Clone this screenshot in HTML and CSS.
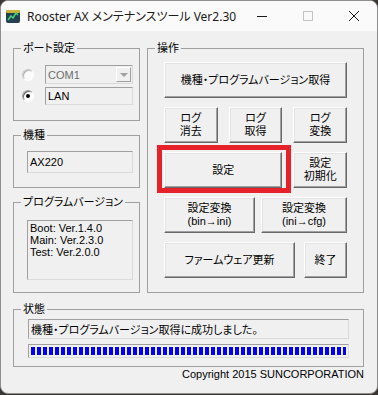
FILE: index.html
```html
<!DOCTYPE html>
<html lang="ja">

<head>
    <meta charset="UTF-8">
    <meta name="viewport" content="width=device-width, initial-scale=1.0">
    <title>Rooster AX メンテナンスツール</title>
    <link rel="stylesheet" href="styles.css">
</head>

<body>
    <div class="window">
        <header class="titlebar">
            <svg class="app-icon" viewBox="0 0 16 16" width="16" height="16">
                <rect x="1" y="2" width="14" height="13" rx="2" fill="#24404f" />
                <rect x="1" y="2" width="14" height="3" rx="1" fill="#c9b23c" />
                <polyline points="3,12 6,8 8,10 11,5 13,7" fill="none" stroke="#3fd07a" stroke-width="1.5" />
            </svg>
            <span class="title">Rooster AX メンテナンスツール Ver2.30</span>
            <div class="caption-buttons">
                <span class="cap-btn">
                    <svg width="10" height="10" viewBox="0 0 10 10"><line x1="0" y1="5.5" x2="10" y2="5.5" stroke="#1a1a1a" /></svg>
                </span>
                <span class="cap-btn">
                    <svg width="10" height="10" viewBox="0 0 10 10"><rect x="0.5" y="0.5" width="9" height="9" fill="none" stroke="#c2c2c2" /></svg>
                </span>
                <span class="cap-btn">
                    <svg width="10" height="10" viewBox="0 0 10 10"><path d="M0 0 L10 10 M10 0 L0 10" stroke="#1a1a1a" stroke-width="1" /></svg>
                </span>
            </div>
        </header>

        <main class="client">
            <div class="upper">
                <div class="left-col">
                    <fieldset class="group">
                        <legend>ポート設定</legend>
                        <div class="port-body">
                            <div class="port-row">
                                <span class="radio disabled"></span>
                                <div class="combo disabled">
                                    <span class="combo-text">COM1</span>
                                    <span class="drop"></span>
                                </div>
                            </div>
                            <div class="port-row">
                                <span class="radio checked"></span>
                                <div class="edit lan">LAN</div>
                            </div>
                        </div>
                    </fieldset>

                    <fieldset class="group">
                        <legend>機種</legend>
                        <div class="model-body">
                            <div class="edit model">AX220</div>
                        </div>
                    </fieldset>

                    <fieldset class="group grow">
                        <legend>プログラムバージョン</legend>
                        <div class="version-body">
                            <div class="edit versions">
                                Boot: Ver.1.4.0<br>
                                Main: Ver.2.3.0<br>
                                Test: Ver.2.0.0
                            </div>
                        </div>
                    </fieldset>
                </div>

                <fieldset class="group ops">
                    <legend>操作</legend>
                    <div class="ops-body">
                        <div class="row-one">
                            <button class="btn">機種・プログラムバージョン取得</button>
                        </div>
                        <div class="row-three">
                            <button class="btn">ログ<br>消去</button>
                            <button class="btn">ログ<br>取得</button>
                            <button class="btn">ログ<br>変換</button>
                        </div>
                        <div class="row-three">
                            <div class="marked">
                                <button class="btn">設定</button>
                            </div>
                            <button class="btn">設定<br>初期化</button>
                        </div>
                        <div class="row-convert">
                            <button class="btn">設定変換<br>(bin→ini)</button>
                            <button class="btn">設定変換<br>(ini→cfg)</button>
                        </div>
                        <div class="row-last">
                            <button class="btn">ファームウェア更新</button>
                            <button class="btn">終了</button>
                        </div>
                    </div>
                </fieldset>
            </div>

            <fieldset class="group status">
                <legend>状態</legend>
                <div class="status-body">
                    <div class="edit message">機種・プログラムバージョン取得に成功しました。</div>
                    <div class="progress"><div class="progress-fill"></div></div>
                </div>
            </fieldset>

            <div class="copyright">Copyright 2015 SUNCORPORATION</div>
        </main>
    </div>
</body>

</html>
```

FILE: styles.css
```css
* {
    box-sizing: border-box;
}

html,
body {
    margin: 0;
}

body {
    width: 378px;
    height: 395px;
    overflow: hidden;
    background: #3b3632;
    font-family: "Liberation Sans", "Noto Sans CJK JP", sans-serif;
    font-size: 11px;
    font-feature-settings: "palt";
    color: #000;
}

.window {
    width: 378px;
    height: 394px;
    background: #f0f0f0;
    border: 1px solid #8e8e8e;
    border-radius: 8px;
    overflow: hidden;
    display: flex;
    flex-direction: column;
}

/* Title bar */

.titlebar {
    height: 30px;
    flex: none;
    background: #fafafa;
    display: flex;
    align-items: center;
}

.app-icon {
    margin-left: 4px;
    flex: none;
}

.title {
    margin-left: 6px;
    font-family: "Noto Sans", "Noto Sans CJK JP", sans-serif;
    font-size: 12px;
    color: #1a1a1a;
    flex: 1;
}

.caption-buttons {
    display: flex;
    height: 100%;
}

.cap-btn {
    width: 46px;
    display: flex;
    align-items: center;
    justify-content: center;
}

/* Client area */

.client {
    flex: 1;
    padding: 11px 13px 0 12px;
    display: flex;
    flex-direction: column;
}

.upper {
    display: flex;
    gap: 7px;
}

.left-col {
    width: 127px;
    display: flex;
    flex-direction: column;
    gap: 8px;
}

.group {
    margin: 0;
    padding: 0;
    border: 1px solid #a0a0a0;
    min-width: 0;
}

.group legend {
    margin-left: 7px;
    padding: 0 2px;
    line-height: 13px;
}

.grow {
    flex: 1;
}

.ops {
    flex: 1;
}

/* Edit boxes */

.edit {
    border: 1px solid;
    border-color: #a0a0a0 #dadada #dadada #a0a0a0;
    background: #f0f0f0;
    padding-left: 2px;
}

.port-body {
    padding: 10px 6px 15px 8px;
    display: flex;
    flex-direction: column;
    gap: 3px;
}

.port-row {
    display: flex;
    align-items: center;
    gap: 11px;
}

.radio {
    width: 12px;
    height: 12px;
    flex: none;
    border-radius: 50%;
    border: 1px solid;
    border-color: #a0a0a0 #fff #fff #a0a0a0;
    box-shadow: inset 1px 1px 0 #696969;
    background: #fff;
    position: relative;
}

.radio.disabled {
    border-color: #c8c8c8 #fff #fff #c8c8c8;
    box-shadow: inset 1px 1px 0 #b4b4b4;
    background: #fbfbfb;
}

.radio.checked::after {
    content: "";
    position: absolute;
    left: 3px;
    top: 3px;
    width: 4px;
    height: 4px;
    border-radius: 50%;
    background: #000;
}

.combo {
    flex: 1;
    height: 19px;
    display: flex;
    align-items: center;
    justify-content: space-between;
    border: 1px solid;
    border-color: #a0a0a0 #dadada #dadada #a0a0a0;
    padding: 0 1px 0 2px;
}

.combo-text {
    color: #6d6d6d;
}

.drop {
    width: 15px;
    height: 15px;
    border: 1px solid;
    border-color: #fff #a0a0a0 #a0a0a0 #fff;
    display: flex;
    align-items: center;
    justify-content: center;
}

.drop::before {
    content: "";
    border-left: 4px solid transparent;
    border-right: 4px solid transparent;
    border-top: 4px solid #a0a0a0;
}

.lan {
    flex: 1;
    height: 18px;
    display: flex;
    align-items: center;
}

.model-body {
    padding: 9px 6px 14px 13px;
}

.model {
    height: 22px;
    display: flex;
    align-items: center;
}

.version-body {
    padding: 11px 6px 12px 13px;
}

.versions {
    height: 60px;
    padding-top: 1px;
    line-height: 12px;
}

/* Buttons */

.ops-body {
    padding: 7px 16px 13px 16px;
    display: flex;
    flex-direction: column;
    gap: 9px;
}

.btn {
    width: 100%;
    height: 36px;
    margin: 0;
    padding: 0;
    font: inherit;
    line-height: 13px;
    color: #000;
    background: #f0f0f0;
    border: 1px solid;
    border-color: #fff #696969 #696969 #fff;
    box-shadow: inset -1px -1px 0 #a0a0a0, inset 1px 1px 0 #e3e3e3;
}

.row-three {
    display: grid;
    grid-template-columns: repeat(3, 1fr);
    gap: 11px;
}

.marked {
    grid-column: span 2;
    position: relative;
}

/* red annotation frame drawn over the screenshot */
.marked::after {
    content: "";
    position: absolute;
    top: -7px;
    left: -7px;
    right: -9px;
    bottom: -5px;
    border: 5px solid #e62129;
    pointer-events: none;
}

.row-convert {
    display: grid;
    grid-template-columns: 91px 1fr;
    gap: 6px;
}

.row-last {
    display: grid;
    grid-template-columns: 1fr 43px;
    gap: 9px;
}

/* Status */

.status {
    margin-top: 10px;
}

.status-body {
    padding: 3px 14px 8px 14px;
    display: flex;
    flex-direction: column;
    gap: 5px;
}

.message {
    height: 20px;
    display: flex;
    align-items: center;
}

.progress {
    height: 14px;
    border: 1px solid;
    border-color: #a0a0a0 #dadada #dadada #a0a0a0;
    padding: 2px;
}

.progress-fill {
    height: 100%;
    background: repeating-linear-gradient(90deg, #0000f4 0 4px, transparent 4px 6px);
}

.copyright {
    margin-top: 1px;
    text-align: right;
    line-height: 13px;
}
```
